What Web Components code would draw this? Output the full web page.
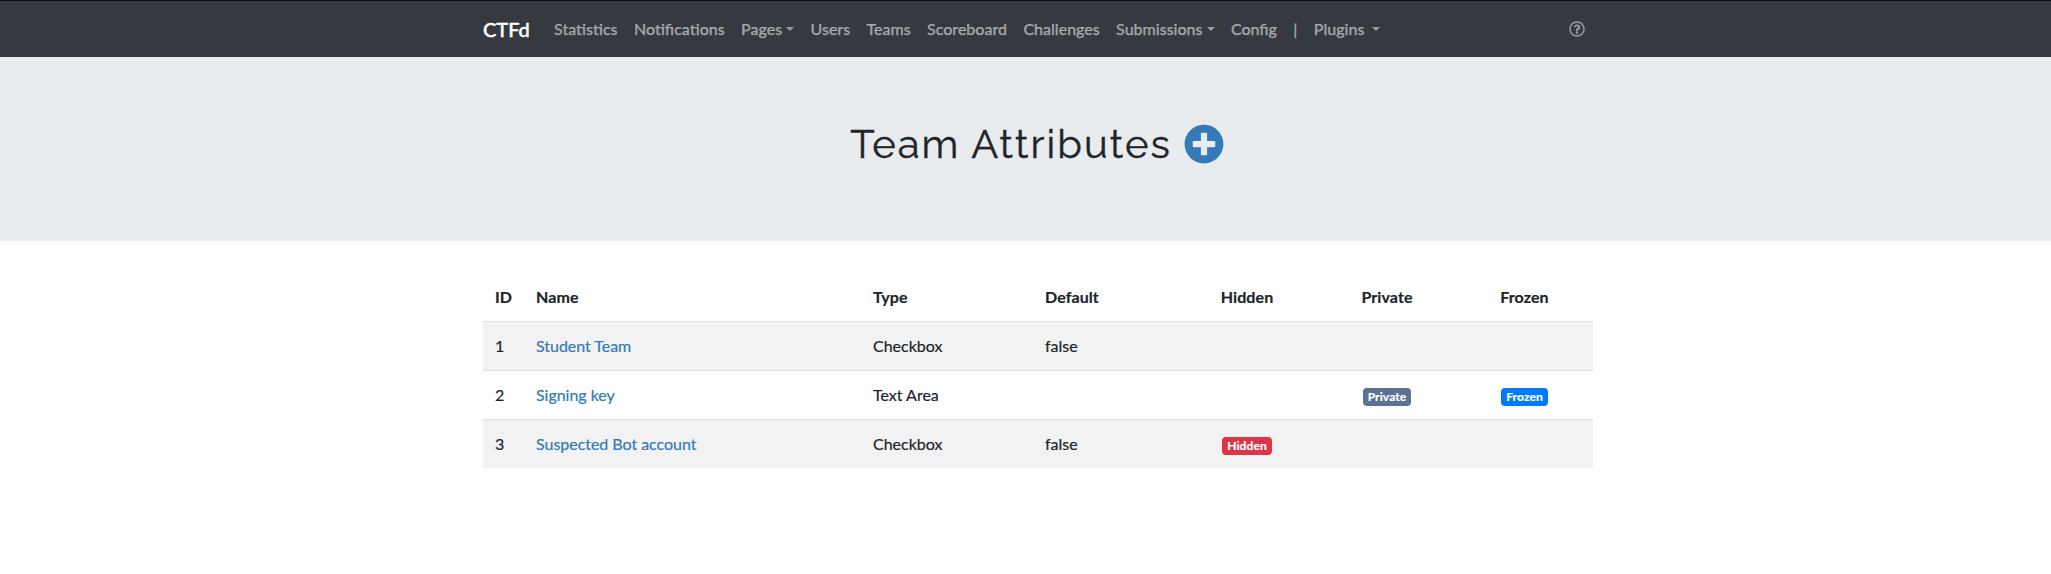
<!DOCTYPE html>
<html lang="en">
<head>
<meta charset="utf-8">
<title>Team Attributes</title>
<style>
html,body{margin:0;padding:0;background:#fff}
body{font:400 16px/24px Lato,"Open Sans",sans-serif;color:#212529;-webkit-text-stroke:.2px}
</style>
</head>
<body>
<ctf-admin-page></ctf-admin-page>
<script>
const define = (name, html) => {
  const t = document.createElement('template');
  t.innerHTML = html;
  customElements.define(name, class extends HTMLElement {
    constructor() {
      super();
      this.attachShadow({ mode: 'open' }).append(t.content.cloneNode(true));
    }
  });
};

define('nav-item', `<style>
:host{display:block;padding:8px 8.2px;color:rgba(255,255,255,.5);font-weight:500;white-space:pre;-webkit-text-stroke:.25px}
:host([menu])::after{content:"";display:inline-block;margin-left:4px;vertical-align:4px;border-top:4.8px solid;border-left:4.8px solid transparent;border-right:4.8px solid transparent}
</style><slot></slot>`);

define('help-icon', `<style>:host{display:block;padding:8px;color:rgba(255,255,255,.5)}svg{display:block;margin:4px 0}</style>
<svg width="16" height="16" viewBox="0 0 512 512" fill="currentColor"><path d="M256 8C119 8 8 119.100 8 256c0 137 111 248 248 248s248-111 248-248C504 119.100 393 8 256 8zm0 448c-110.500 0-200-89.400-200-200 0-110.500 89.500-200 200-200 110.500 0 200 89.500 200 200 0 110.500-89.400 200-200 200zm107.200-255.200c0 67.100-72.400 68.100-72.400 92.900V300c0 6.600-5.400 12-12 12h-45.600c-6.600 0-12-5.400-12-12v-8.700c0-35.700 27.100-50 47.600-61.500 17.600-9.800 28.300-16.500 28.300-29.600 0-17.200-22-28.700-39.800-28.700-23.200 0-33.900 11-49 30-4.100 5.100-11.500 6.100-16.700 2.100l-27.800-21.100c-5.100-3.900-6.300-11.100-2.600-16.400C184.800 131.500 214.900 112 261.800 112c49.100 0 101.500 38.300 101.500 88.800zM298 368c0 23.200-18.800 42-42 42s-42-18.800-42-42 18.800-42 42-42 42 18.800 42 42z"/></svg>`);

define('top-nav', `<style>
:host{display:block;background:#343a40;border-top:1px solid #0c0d0e;padding:8px 0;height:40px}
.bar{width:1110px;margin-left:483px;display:flex;align-items:center}
.brand{font-size:20px;line-height:30px;color:#fff;font-weight:500;margin-right:16px;-webkit-text-stroke:.4px}
help-icon{margin-left:auto}
</style><div class="bar"><span class="brand">CTFd</span>
<nav-item>Statistics</nav-item><nav-item>Notifications</nav-item><nav-item menu>Pages</nav-item><nav-item>Users</nav-item><nav-item>Teams</nav-item><nav-item>Scoreboard</nav-item><nav-item>Challenges</nav-item><nav-item menu>Submissions</nav-item><nav-item>Config</nav-item><nav-item>|</nav-item><nav-item menu>Plugins </nav-item><help-icon></help-icon></div>`);

define('page-hero', `<style>
:host{display:block;background:#e9ecef;height:184px;box-sizing:border-box}
.inner{width:1108px;margin-left:483px;padding-top:63px;display:flex;justify-content:center}
h1{margin:0;font:400 40px/48px "Raleway","Lato",sans-serif;letter-spacing:2.04px;white-space:nowrap;-webkit-text-stroke:.4px}
svg{display:block;margin:4px 0 0 12px}
</style><div class="inner"><h1><slot></slot></h1>
<svg width="40" height="40" viewBox="0 0 512 512" fill="#337ab7"><path d="M256 8C119 8 8 119 8 256s111 248 248 248 248-111 248-248S393 8 256 8zm144 276c0 6.600-5.400 12-12 12h-92v92c0 6.600-5.400 12-12 12h-56c-6.600 0-12-5.400-12-12v-92h-92c-6.600 0-12-5.400-12-12v-56c0-6.600 5.400-12 12-12h92v-92c0-6.600 5.400-12 12-12h56c6.600 0 12 5.400 12 12v92h92c6.600 0 12 5.400 12 12v56z"/></svg></div>`);

define('tag-badge', `<style>
:host{display:inline-block;font-size:12px;font-weight:700;line-height:12px;padding:3px 4.8px;border-radius:4px;color:#fff;background:#5b7290;vertical-align:baseline;letter-spacing:.12px}
:host([kind=primary]){background:#007bff}
:host([kind=danger]){background:#dc3545}
</style><slot></slot>`);

define('attr-row', `<style>
:host{display:grid;grid-template-columns:41px 337px 172px 145px 138px 142px 133px;height:48px;border-top:1px solid #dee2e6}
:host([head]){border-top:0;font-weight:700;letter-spacing:.08px}
:host([odd]){background:#f2f2f2}
::slotted(*){padding:12px;display:block}
::slotted(:nth-child(n+5)){text-align:center}
::slotted(a){color:#337ab7;letter-spacing:-.03px}
</style><slot></slot>`);

define('attr-table', `<style>:host{display:block;width:1110px;margin:32px 0 0 483px}</style>
<attr-row head><span>ID</span><span>Name</span><span>Type</span><span>Default</span><span>Hidden</span><span>Private</span><span>Frozen</span></attr-row>
<attr-row odd><span>1</span><a>Student Team</a><span>Checkbox</span><span>false</span></attr-row>
<attr-row><span>2</span><a>Signing key</a><span>Text Area</span><span></span><span></span><span><tag-badge>Private</tag-badge></span><span><tag-badge kind="primary">Frozen</tag-badge></span></attr-row>
<attr-row odd><span>3</span><a>Suspected Bot account</a><span>Checkbox</span><span>false</span><span><tag-badge kind="danger">Hidden</tag-badge></span></attr-row>`);

define('ctf-admin-page', `<style>:host{display:block}</style><top-nav></top-nav><page-hero>Team Attributes</page-hero><attr-table></attr-table>`);
</script>
</body>
</html>
